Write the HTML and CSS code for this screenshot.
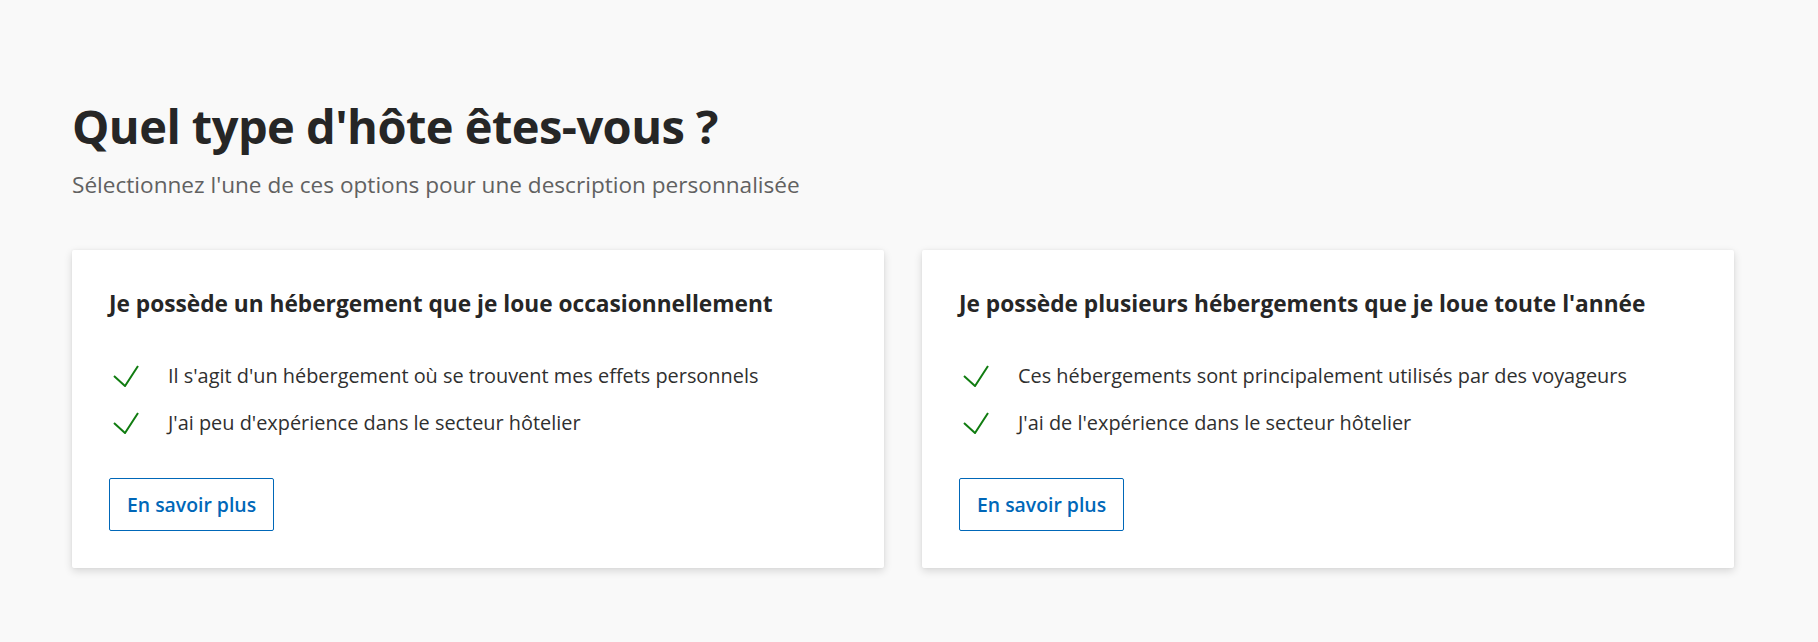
FILE: index.html
```html
<!DOCTYPE html>
<html lang="fr">
<head>
<meta charset="utf-8">
<title>Quel type d'hôte êtes-vous ?</title>
<link rel="stylesheet" href="styles.css">
</head>
<body>
<main class="page">
  <h1 class="title">Quel type d'hôte êtes-vous ?</h1>
  <p class="subtitle">Sélectionnez l'une de ces options pour une description personnalisée</p>
  <div class="cards">
    <section class="card">
      <h2 class="card-title">Je possède un hébergement que je loue occasionnellement</h2>
      <ul class="checks">
        <li class="check-item">
          <svg class="check" viewBox="0 0 26 22" aria-hidden="true"><path d="M1 11 L12 21 L25 1"/></svg>
          <span>Il s'agit d'un hébergement où se trouvent mes effets personnels</span>
        </li>
        <li class="check-item">
          <svg class="check" viewBox="0 0 26 22" aria-hidden="true"><path d="M1 11 L12 21 L25 1"/></svg>
          <span>J'ai peu d'expérience dans le secteur hôtelier</span>
        </li>
      </ul>
      <a class="btn" href="#">En savoir plus</a>
    </section>
    <section class="card">
      <h2 class="card-title">Je possède plusieurs hébergements que je loue toute l'année</h2>
      <ul class="checks">
        <li class="check-item">
          <svg class="check" viewBox="0 0 26 22" aria-hidden="true"><path d="M1 11 L12 21 L25 1"/></svg>
          <span>Ces hébergements sont principalement utilisés par des voyageurs</span>
        </li>
        <li class="check-item">
          <svg class="check" viewBox="0 0 26 22" aria-hidden="true"><path d="M1 11 L12 21 L25 1"/></svg>
          <span>J'ai de l'expérience dans le secteur hôtelier</span>
        </li>
      </ul>
      <a class="btn" href="#">En savoir plus</a>
    </section>
  </div>
</main>
</body>
</html>
```

FILE: styles.css
```css
* { box-sizing: border-box; }
html, body {
  margin: 0;
  padding: 0;
  background: #f9f9f9;
  font-family: "Open Sans", "Noto Sans", "Liberation Sans", sans-serif;
  color: #262626;
}
.page {
  padding: 95px 84px 60px 72px;
  min-height: 642px;
}
.title {
  margin: 0;
  font-size: 47px;
  line-height: 62px;
  font-weight: 700;
  letter-spacing: -0.55px;
  color: #262626;
}
.subtitle {
  margin: 16px 0 0;
  font-size: 22.6px;
  line-height: 24px;
  color: #616161;
}
.cards {
  margin-top: 53px;
  display: grid;
  grid-template-columns: 812px 812px;
  gap: 38px;
}
.card {
  background: #fff;
  border-radius: 2px;
  box-shadow: 0 3px 9px rgba(0, 0, 0, 0.14), 0 0 3px rgba(0, 0, 0, 0.05);
  padding: 41px 36px 37px 37px;
  height: 318px;
}
.card-title {
  margin: 0;
  font-size: 22.7px;
  line-height: 26px;
  font-weight: 700;
  color: #262626;
}
.checks {
  list-style: none;
  margin: 45px 0 0;
  padding: 0;
  display: flex;
  flex-direction: column;
  gap: 19px;
}
.check-item {
  display: flex;
  align-items: center;
  font-size: 19.9px;
  line-height: 28px;
  color: #2f2f2f;
}
.check {
  width: 26px;
  height: 22px;
  margin-left: 4px;
  margin-right: 29px;
  flex: none;
  fill: none;
  stroke: #107c10;
  stroke-width: 2;
}
.btn {
  display: inline-flex;
  align-items: center;
  justify-content: center;
  margin-top: 41px;
  height: 53px;
  padding: 0 17px;
  border: 1px solid #0067b8;
  border-radius: 2px;
  color: #0067b8;
  font-size: 19.4px;
  font-weight: 600;
  text-decoration: none;
}
```
